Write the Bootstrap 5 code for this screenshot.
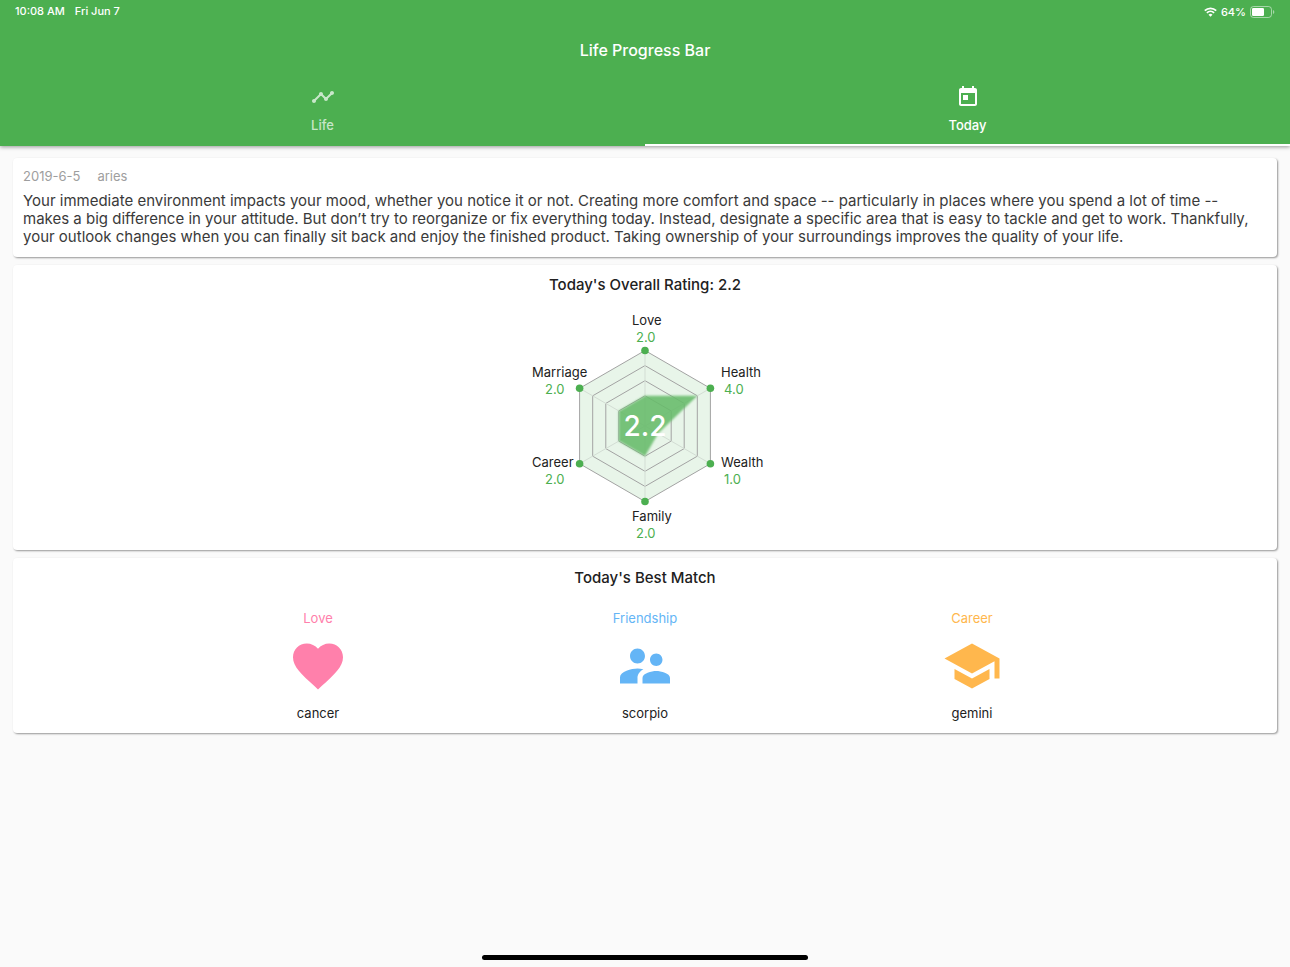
<!DOCTYPE html>
<html lang="en">
<head>
<meta charset="utf-8">
<meta name="viewport" content="width=device-width, initial-scale=1">
<title>Life Progress Bar</title>
<link href="https://cdn.jsdelivr.net/npm/bootstrap@5.3.0/dist/css/bootstrap.min.css" rel="stylesheet">
<script src="https://cdn.jsdelivr.net/npm/bootstrap@5.3.0/dist/js/bootstrap.bundle.min.js" defer></script>
<style>
  :root { --green: #4caf50; }
  body { font-family: Inter, "Liberation Sans", sans-serif; background: #fafafa; color: #212121; }
  .app-header { background: var(--green); box-shadow: 0 1px 4px rgba(0,0,0,.4); }
  .status-bar { height: 24px; font-size: 11px; line-height: 23px; font-weight: 500; padding: 0 15px; }
  .status-time { gap: 10px; }
  .app-title { font-size: 16px; line-height: 20px; font-weight: 500; padding: 16px 0 14px; }
  .tabs .nav-link { height: 72px; padding: 11px 0 0; color: rgba(255,255,255,.7); font-size: 13px; line-height: 20px; font-weight: 500; border-bottom: 2px solid transparent; }
  .tabs .nav-link.active { color: #fff; border-bottom-color: #fff; }
  .tabs svg { margin-bottom: 6px; }
  .page { padding: 12px 13px; gap: 8px; }
  .panel { border: 0; border-radius: 4px; padding: 10px; box-shadow: 1px 1px 2px rgba(0,0,0,.4); }
  .panel-title { font-size: 15px; line-height: 20px; font-weight: 500; }
  .meta { font-size: 13px; line-height: 16px; color: #9e9e9e; gap: 17px; }
  .reading { font-size: 15px; line-height: 18px; color: #3a3a3a; padding: 8px 0 1px; }
  .radar text { font-size: 13px; fill: #212121; }
  .radar .score { fill: var(--green); }
  .radar .total { font-size: 28px; font-weight: 500; fill: #fff; }
  .match { width: 64px; font-size: 13px; line-height: 20px; }
  .match svg { margin: 8px 0 7px; }
  .love { color: #ff80ab; } .friend { color: #64b5f6; } .career { color: #ffb74d; }
  .home-bar { width: 326px; height: 5px; border-radius: 3px; background: #000; margin-bottom: 7px; }
</style>
</head>
<body class="d-flex flex-column min-vh-100">
<header class="app-header text-white">
  <div class="status-bar d-flex justify-content-between">
    <div class="status-time d-flex"><span>10:08 AM</span><span>Fri Jun 7</span></div>
    <div class="d-flex align-items-center gap-1">
      <svg width="13" height="10" viewBox="0 0 13 10" fill="none" stroke="#fff" stroke-width="1.8" aria-hidden="true"><path d="M.8 3.7a8.2 8.2 0 0 1 11.4 0M2.9 5.9a5.2 5.2 0 0 1 7.2 0"/><path d="M6.5 9.7 4.5 7.7a2.9 2.9 0 0 1 4 0z" fill="#fff" stroke="none"/></svg>
      <span>64%</span>
      <svg width="25" height="12" viewBox="0 0 25 12" aria-hidden="true"><rect x=".5" y=".5" width="21" height="11" rx="3" fill="none" stroke="#fff" stroke-opacity=".5"/><rect x="2" y="2" width="12" height="8" rx="1.3" fill="#fff"/><path d="M23 4v4c1.800-.7 1.800-3.300 0-4z" fill="#fff" fill-opacity=".5"/></svg>
    </div>
  </div>
  <h1 class="app-title text-center m-0">Life Progress Bar</h1>
  <nav class="tabs nav nav-justified">
    <a class="nav-link nav-item d-flex flex-column align-items-center" href="#life">
      <svg width="24" height="24" viewBox="0 0 24 24" fill="currentColor" aria-hidden="true"><path d="M23 8c0 1.100-.9 2-2 2-.18 0-.35-.02-.51-.07l-3.560 3.550c.05.16.07.34.07.52 0 1.100-.9 2-2 2s-2-.9-2-2c0-.18.02-.36.07-.52l-2.550-2.550c-.16.05-.34.07-.52.07s-.36-.02-.52-.07l-4.550 4.560c.05.16.07.33.07.51 0 1.100-.9 2-2 2s-2-.9-2-2 .9-2 2-2c.18 0 .35.02.51.07l4.560-4.550C8.020 9.360 8 9.180 8 9c0-1.100.9-2 2-2s2 .9 2 2c0 .18-.02.36-.07.52l2.550 2.550c.16-.05.34-.07.52-.07s.36.02.52.07l3.550-3.560C19.020 8.350 19 8.180 19 8c0-1.100.9-2 2-2s2 .9 2 2z"/></svg>
      <span>Life</span>
    </a>
    <a class="nav-link nav-item active d-flex flex-column align-items-center" href="#today" aria-current="page">
      <svg width="24" height="24" viewBox="0 0 24 24" fill="currentColor" aria-hidden="true"><path d="M19 3h-1V1h-2v2H8V1H6v2H5c-1.110 0-1.990.9-1.990 2L3 19c0 1.100.89 2 2 2h14c1.100 0 2-.9 2-2V5c0-1.100-.9-2-2-2zm0 16H5V8h14v11zM7 10h5v5H7z"/></svg>
      <span>Today</span>
    </a>
  </nav>
</header>

<main class="page d-flex flex-column flex-grow-1">
  <section class="panel card">
    <div class="meta d-flex"><span>2019-6-5</span><span>aries</span></div>
    <p class="reading m-0">Your immediate environment impacts your mood, whether you notice it or not. Creating more comfort and space -- particularly in places where you spend a lot of time -- makes a big difference in your attitude. But don’t try to reorganize or fix everything today. Instead, designate a specific area that is easy to tackle and get to work. Thankfully, your outlook changes when you can finally sit back and enjoy the finished product. Taking ownership of your surroundings improves the quality of your life.</p>
  </section>

  <section class="panel card align-items-center">
    <h2 class="panel-title m-0">Today's Overall Rating: 2.2</h2>
    <svg class="radar" width="260" height="245" viewBox="-130 -131 260 245" role="img" aria-label="Ratings by area">
      <defs><filter id="soft" x="-20%" y="-20%" width="140%" height="140%"><feGaussianBlur stdDeviation="1.300"/></filter></defs>
      <g stroke="#a3a3a3" fill="none">
        <path d="M0-75.500 65.400-37.700V37.700L0 75.500-65.400 37.700V-37.700z" fill="#e8f5e9"/>
        <path d="M0-60.400 52.300-30.200V30.200L0 60.400-52.300 30.200V-30.200z"/>
        <path d="M0-45.300 39.200-22.600V22.600L0 45.300-39.200 22.600V-22.600z"/>
        <path d="M0-30.200 26.200-15.100V15.100L0 30.200-26.200 15.100V-15.100z"/>
        <path d="M0-75.500V75.500M-65.400-37.700 65.400 37.700M-65.400 37.700 65.400-37.700" stroke="#d3ddd4"/>
      </g>
      <path d="M0-30.200H52.300L13.100 7.500 0 30.200-26.200 15.100V-15.100z" fill="#66bb6a" fill-opacity=".88" filter="url(#soft)"/>
      <g fill="#4caf50"><circle cy="-75.500" r="3.800"/><circle cx="65.400" cy="-37.700" r="3.800"/><circle cx="65.400" cy="37.700" r="3.800"/><circle cy="75.500" r="3.800"/><circle cx="-65.400" cy="37.700" r="3.800"/><circle cx="-65.400" cy="-37.700" r="3.800"/></g>
      <text x="-13" y="-101">Love</text><text class="score" x="-9" y="-84">2.0</text>
      <text x="76" y="-49">Health</text><text class="score" x="79" y="-32">4.0</text>
      <text x="76" y="41">Wealth</text><text class="score" x="79" y="58">1.0</text>
      <text x="-13" y="95">Family</text><text class="score" x="-9" y="112">2.0</text>
      <text x="-113" y="41">Career</text><text class="score" x="-100" y="58">2.0</text>
      <text x="-113" y="-49">Marriage</text><text class="score" x="-100" y="-32">2.0</text>
      <text class="total" y="10" text-anchor="middle">2.2</text>
    </svg>
  </section>

  <section class="panel card">
    <h2 class="panel-title text-center">Today's Best Match</h2>
    <div class="d-flex justify-content-evenly pt-2">
      <div class="match d-flex flex-column align-items-center">
        <span class="love pt-1">Love</span>
        <svg class="love" width="60" height="60" viewBox="0 0 24 24" fill="currentColor" aria-hidden="true"><path d="m12 21.350-1.450-1.320C5.400 15.360 2 12.280 2 8.500 2 5.420 4.420 3 7.500 3c1.740 0 3.410.81 4.500 2.090C13.090 3.810 14.760 3 16.500 3 19.580 3 22 5.420 22 8.500c0 3.780-3.400 6.860-8.550 11.540L12 21.350z"/></svg>
        <span>cancer</span>
      </div>
      <div class="match d-flex flex-column align-items-center">
        <span class="friend pt-1">Friendship</span>
        <svg class="friend" width="60" height="60" viewBox="0 0 24 24" fill="currentColor" aria-hidden="true"><path d="M16.500 12c1.380 0 2.490-1.120 2.490-2.500S17.880 7 16.500 7C15.120 7 14 8.120 14 9.500s1.120 2.500 2.500 2.500zM9 11c1.660 0 2.990-1.340 2.990-3S10.660 5 9 5C7.340 5 6 6.340 6 8s1.340 3 3 3zm7.500 3c-1.830 0-5.500.92-5.500 2.750V19h11v-2.250c0-1.830-3.670-2.750-5.500-2.750zM9 13c-2.330 0-7 1.170-7 3.500V19h7v-2.250c0-.85.33-2.340 2.370-3.470C10.500 13.100 9.660 13 9 13z"/></svg>
        <span>scorpio</span>
      </div>
      <div class="match d-flex flex-column align-items-center">
        <span class="career pt-1">Career</span>
        <svg class="career" width="60" height="60" viewBox="0 0 24 24" fill="currentColor" aria-hidden="true"><path d="M5 13.180v4L12 21l7-3.820v-4L12 17l-7-3.820zM12 3 1 9l11 6 9-4.910V17h2V9L12 3z"/></svg>
        <span>gemini</span>
      </div>
    </div>
  </section>
</main>
<div class="home-bar align-self-center"></div>
</body>
</html>
